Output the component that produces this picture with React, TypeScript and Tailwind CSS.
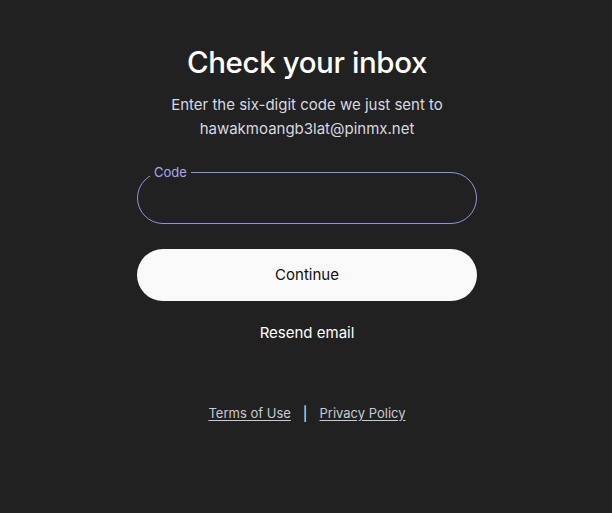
export default function App() {
  return (
    <div
      className="min-h-[513px] w-full bg-[#212121] text-white flex flex-col items-center"
      style={{ fontFamily: 'Inter, "Noto Sans", sans-serif' }}
    >
      <div className="w-[340px] ml-[2px] flex flex-col items-center pt-[43px]">
        <h1 className="text-[29.5px] leading-[38px] font-medium tracking-[-0.4px] text-white">
          Check your inbox
        </h1>
        <p className="mt-[12px] text-[15px] leading-[24px] text-[#d8d8e0] text-center">
          Enter the six-digit code we just sent to
          <br />
          hawakmoangb3lat@pinmx.net
        </p>

        {/* code field with notched label */}
        <fieldset className="mt-[24px] w-full h-[59px] rounded-full border border-[#8e93dc] px-[12px]">
          <legend className="px-[4px] text-[13px] leading-[14px] text-[#a3aaf3]">Code</legend>
          <input className="w-full h-[40px] bg-transparent outline-none px-[6px] text-[15px] text-white" />
        </fieldset>

        <button className="mt-[25px] w-full h-[52px] rounded-full bg-[#f9f9f9] text-[#0d0d0d] text-[15px]">
          Continue
        </button>

        <button className="mt-[21px] text-[15px] leading-[22px] text-white">Resend email</button>

        <div className="mt-[59px] flex items-center gap-[12px] text-[13px] text-[#c9c9d4]">
          <a href="#" className="underline underline-offset-2">Terms of Use</a>
          <span className="text-[#ececec] text-[14px]">|</span>
          <a href="#" className="underline underline-offset-2">Privacy Policy</a>
        </div>
      </div>
    </div>
  );
}
